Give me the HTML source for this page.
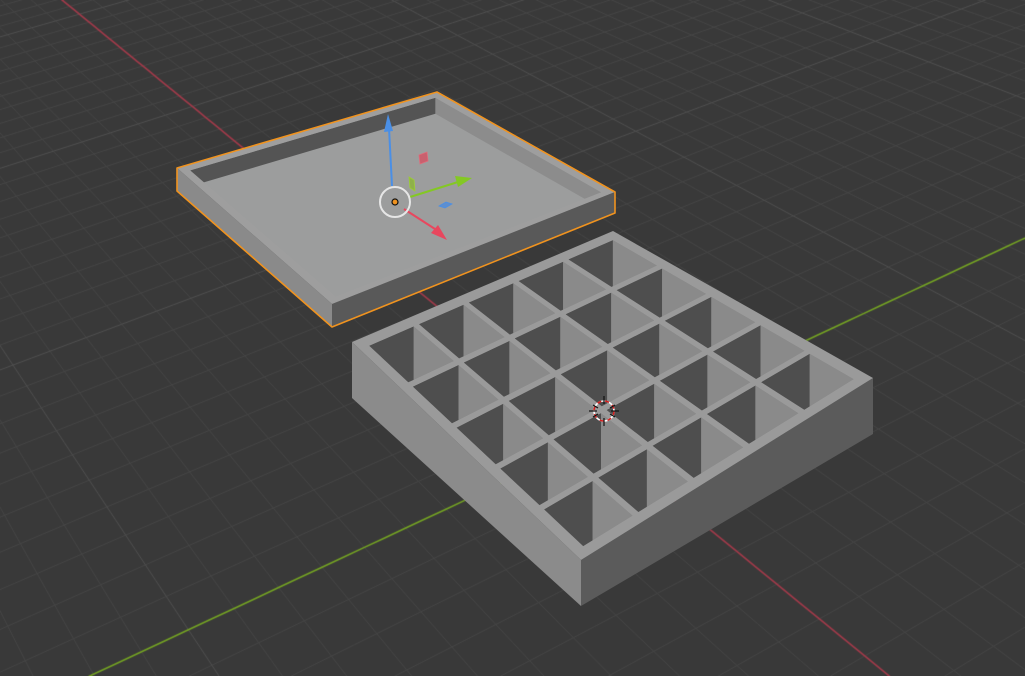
<!DOCTYPE html>
<html><head><meta charset="utf-8"><style>
html,body{margin:0;padding:0;background:#393939;overflow:hidden}
#c{position:absolute;left:0;top:0}
svg{position:absolute;left:0;top:0}
</style></head><body>
<canvas id="c" width="1025" height="676"></canvas>
<svg id="s" width="1025" height="676" viewBox="0 0 1025 676" xmlns="http://www.w3.org/2000/svg"></svg>
<script>
(function(){
var cv=document.getElementById('c'),g=cv.getContext('2d');
g.fillStyle='#393939';g.fillRect(0,0,1025,676);
var O=[598,438],VX=[-573,-519],VY=[3750,-1038],a=0.0265,b=0.0115;
function P(X,Y){var w=a*X+b*Y+1;return [(a*X*VX[0]+b*Y*VY[0]+O[0])/w,(a*X*VX[1]+b*Y*VY[1]+O[1])/w,w];}
function line(fix,isY,step,col,minw){
  for(var t=-60;t<120;t+=step){
    var p1=isY?P(t,fix):P(fix,t),p2=isY?P(t+step,fix):P(fix,t+step);
    if(p1[2]<0.05||p2[2]<0.05)continue;
    var w=(p1[2]+p2[2])/2;
    var sp=40/(w*w); var al;
    if(minw){al=sp>7?0.95:Math.max(0,(sp-3)/4)*0.95;}else al=1;
    if(al<=0.02)continue;
    g.globalAlpha=al;g.strokeStyle=col;g.lineWidth=1;
    g.beginPath();g.moveTo(p1[0],p1[1]);g.lineTo(p2[0],p2[1]);g.stroke();
  }
}
for(var i=-60;i<=120;i++){
  if(i%10==0)continue;
  line(i,true,0.5,'#474747',true);line(i,false,0.5,'#474747',true);
}
for(var i=-60;i<=120;i+=10){
  if(i==0)continue;
  line(i,true,0.5,'#505050',false);line(i,false,0.5,'#505050',false);
}
g.globalAlpha=1;
function axis(isY,col){
  g.strokeStyle=col;g.lineWidth=1.6;g.beginPath();var st=false;
  for(var t=-60;t<200;t+=0.5){var p=isY?P(t,0):P(0,t);if(p[2]<0.05)continue;
    if(!st){g.moveTo(p[0],p[1]);st=true;}else g.lineTo(p[0],p[1]);}
  g.stroke();
}
axis(true,'#a33a4a');axis(false,'#74a323');

var S=document.getElementById('s'),out='';
function pts(a){return a.map(function(p){return p[0].toFixed(1)+','+p[1].toFixed(1)}).join(' ');}
function poly(a,f,extra){out+='<polygon points="'+pts(a)+'" fill="'+f+'" '+(extra||'')+'/>';}
function bil(C,u,v){var L=C[0],B=C[1],R=C[2],F=C[3];
 var x=(1-u)*(1-v)*L[0]+u*(1-v)*B[0]+u*v*R[0]+(1-u)*v*F[0];
 var y=(1-u)*(1-v)*L[1]+u*(1-v)*B[1]+u*v*R[1]+(1-u)*v*F[1];return [x,y];}
function dn(p,h){return [p[0],p[1]+h];}
var cid=0;
function cell(C,u0,u1,v0,v1,h,floor,dark,light){
 var A=bil(C,u0,v0),B=bil(C,u1,v0),Cc=bil(C,u1,v1),D=bil(C,u0,v1);
 cid++;out+='<clipPath id="k'+cid+'"><polygon points="'+pts([A,B,Cc,D])+'"/></clipPath><g clip-path="url(#k'+cid+')">';
 poly([A,B,Cc,D],floor);
 poly([A,B,dn(B,h),dn(A,h)],dark);
 poly([B,Cc,dn(Cc,h),dn(B,h)],light);
 out+='</g>';
}
function box(C,H,col){
 var L=C[0],F=C[3],R=C[2];
 poly([L,F,dn(F,H[1]),dn(L,H[0])],col[0]);
 poly([F,R,dn(R,H[2]),dn(F,H[1])],col[1]);
 poly(C,col[2]);
}
var T=[[352,342],[613,231],[873,378],[581,560]];
box(T,[56,46,56],['#8b8b8b','#5b5b5b','#9a9a9a']);
var r=0.035,d=0.02,n=5,cw=(1-2*r-(n-1)*d)/n;
for(var i=0;i<n;i++)for(var j=0;j<n;j++){
 var u0=r+i*(cw+d),v0=r+j*(cw+d);
 cell(T,u0,u0+cw,v0,v0+cw,62,'#808080','#4e4e4e','#8a8a8a');
}
var Lc=[[177,168],[437,92],[615,192],[332,304]];
box(Lc,[23,23,21],['#8a8a8a','#595959','#9e9e9e']);
cell(Lc,0.03,0.97,0.035,0.97,16,'#9c9d9d','#545454','#8c8c8c');
var L=Lc[0],B=Lc[1],R=Lc[2],F=Lc[3];
out+='<polygon points="'+pts([L,B,R,dn(R,21),dn(F,23),dn(L,23)])+'" fill="none" stroke="#f0931f" stroke-width="1.6" stroke-linejoin="round"/>';
out+='<line x1="392" y1="186" x2="389" y2="128" stroke="#4a8fe6" stroke-width="2"/><polygon points="388,114 384,132 393,131" fill="#4a8fe6"/>';
out+='<line x1="410" y1="197" x2="458" y2="182" stroke="#84c824" stroke-width="2"/><polygon points="472,178 455,176 458,187" fill="#84c824"/>';
out+='<line x1="404" y1="209" x2="435" y2="229" stroke="#e8475e" stroke-width="2"/><polygon points="447,240 431,233 438,225" fill="#e8475e"/>';
out+='<polygon points="419,155 427,152 428,161 420,164" fill="#c9606e" stroke="#e06a7a" stroke-width="0.8"/>';
out+='<polygon points="409,177 414,180 415,191 410,188" fill="#8fb04a" stroke="#9cd030" stroke-width="0.8"/>';
out+='<polygon points="439,206 446,202 452,204 445,208" fill="#5d8fd0" stroke="#4a8fe6" stroke-width="0.8"/>';
out+='<circle cx="395" cy="202" r="15" fill="none" stroke="#e6e6e6" stroke-width="2"/>';
out+='<circle cx="395" cy="202" r="3" fill="#f0931f" stroke="#111" stroke-width="1.2"/>';
out+='<circle cx="604" cy="411" r="10" fill="none" stroke="#fff" stroke-width="1.6"/><circle cx="604" cy="411" r="10" fill="none" stroke="#d41e1e" stroke-width="1.6" stroke-dasharray="4 4"/>';
out+='<g stroke="#111" stroke-width="1.2"><line x1="604" y1="396" x2="604" y2="404"/><line x1="604" y1="418" x2="604" y2="426"/><line x1="589" y1="411" x2="597" y2="411"/><line x1="611" y1="411" x2="619" y2="411"/><line x1="593" y1="405" x2="598" y2="408"/><line x1="610" y1="414" x2="615" y2="417"/><line x1="593" y1="417" x2="598" y2="414"/><line x1="610" y1="408" x2="615" y2="405"/></g>';
S.innerHTML=out;
})();
</script>
</body></html>
